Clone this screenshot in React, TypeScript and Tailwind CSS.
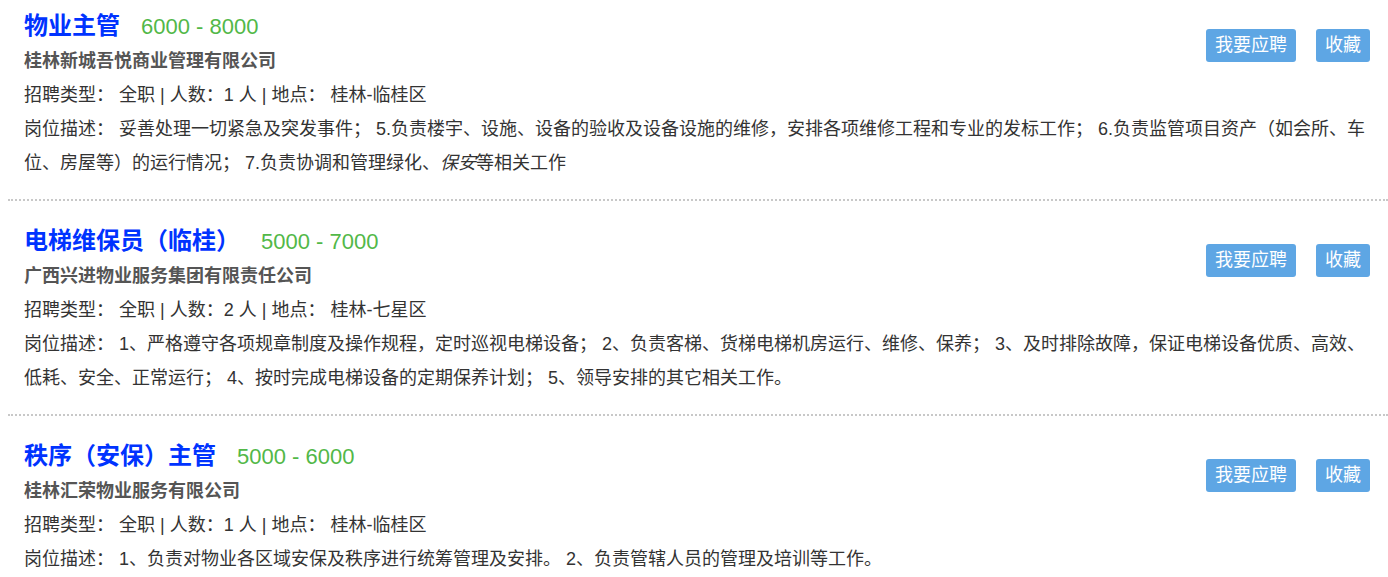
import React from 'react';

interface Job {
  title: string;
  salary: string;
  company: string;
  count: number;
  place: string;
  desc: React.ReactNode;
}

const jobs: Job[] = [
  {
    title: '物业主管',
    salary: '6000 - 8000',
    company: '桂林新城吾悦商业管理有限公司',
    count: 1,
    place: '桂林-临桂区',
    desc: (
      <>
        妥善处理一切紧急及突发事件； 5.负责楼宇、设施、设备的验收及设备设施的维修，安排各项维修工程和专业的发标工作； 6.负责监管项目资产（如会所、车位、房屋等）的运行情况； 7.负责协调和管理绿化、<em className="italic">保安</em>等相关工作
      </>
    ),
  },
  {
    title: '电梯维保员（临桂）',
    salary: '5000 - 7000',
    company: '广西兴进物业服务集团有限责任公司',
    count: 2,
    place: '桂林-七星区',
    desc: '1、严格遵守各项规章制度及操作规程，定时巡视电梯设备； 2、负责客梯、货梯电梯机房运行、维修、保养； 3、及时排除故障，保证电梯设备优质、高效、低耗、安全、正常运行； 4、按时完成电梯设备的定期保养计划； 5、领导安排的其它相关工作。',
  },
  {
    title: '秩序（安保）主管',
    salary: '5000 - 6000',
    company: '桂林汇荣物业服务有限公司',
    count: 1,
    place: '桂林-临桂区',
    desc: '1、负责对物业各区域安保及秩序进行统筹管理及安排。 2、负责管辖人员的管理及培训等工作。',
  },
];

const JobItem: React.FC<{ job: Job }> = ({ job }) => (
  <div className="pt-[23px] first:pt-[9px] pb-[19px] pl-[16px] pr-[18px] border-b-2 border-dotted border-[#c8c8c8]">
    <div className="flex justify-between">
      <div>
        {/* title + salary */}
        <div className="flex items-baseline leading-[34px]">
          <span className="text-[24px] font-bold text-[#0033ff]">{job.title}</span>
          <span className="ml-[21px] text-[22px] text-[#52b848]">{job.salary}</span>
        </div>
        <div className="text-[18px] font-bold text-[#555] leading-[34px]">{job.company}</div>
        <div className="text-[18px] text-[#333] leading-[34px]">
          招聘类型： 全职 | 人数：{job.count} 人 | 地点：&nbsp;{job.place}
        </div>
      </div>
      <div className="flex gap-[20px] mt-[20px] h-[33px]">
        <button className="w-[90px] h-[33px] rounded-[3px] bg-[#5ea6e4] text-white text-[18px] leading-[33px]">我要应聘</button>
        <button className="w-[54px] h-[33px] rounded-[3px] bg-[#5ea6e4] text-white text-[18px] leading-[33px]">收藏</button>
      </div>
    </div>
    <div className="text-[18px] text-[#333] leading-[34px]">
      岗位描述： {job.desc}
    </div>
  </div>
);

export default function App() {
  return (
    <div
      className="w-[1388px] h-[577px] overflow-hidden bg-white pl-[8px]"
      style={{ fontFamily: '"Liberation Sans", "Noto Sans CJK SC", sans-serif' }}
    >
      {jobs.map((job) => (
        <JobItem key={job.title} job={job} />
      ))}
    </div>
  );
}
